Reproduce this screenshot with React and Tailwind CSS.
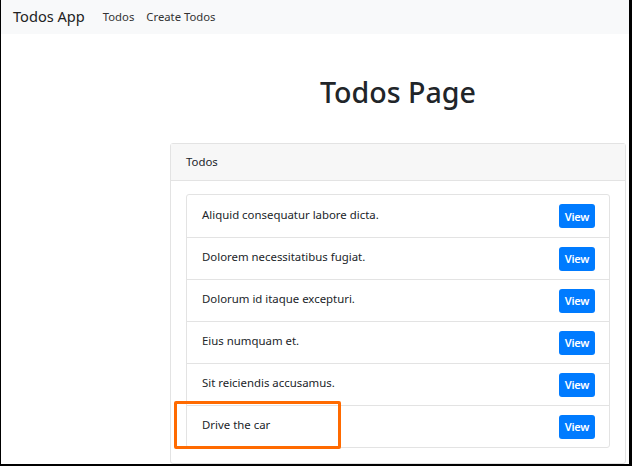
import React from 'react';

const todos = [
  'Aliquid consequatur labore dicta.',
  'Dolorem necessitatibus fugiat.',
  'Dolorum id itaque excepturi.',
  'Eius numquam et.',
  'Sit reiciendis accusamus.',
  'Drive the car',
];

const App = () => {
  return (
    <div
      className="w-[632px] h-[466px] overflow-hidden bg-black"
      style={{ fontFamily: '"Noto Sans", "Open Sans", sans-serif' }}
    >
      <div className="relative ml-px w-[628px] h-[464px] overflow-hidden bg-white text-[#212529]">
        {/* navbar */}
        <nav className="h-[34px] bg-[#f8f9fa] flex items-center pl-[12px]">
          <span className="text-[14.6px] text-[#222] mr-[18px] leading-none -mt-[1px]">Todos App</span>
          <a className="text-[11.3px] text-[#333] mr-[12px] leading-none">Todos</a>
          <a className="text-[11.3px] text-[#333] leading-none">Create Todos</a>
        </nav>

        <div className="ml-[169px] w-[456px]">
          <h1 className="text-[28.6px] font-medium text-center leading-[38px] mt-[39px] mb-[32px] text-[#212529]">
            Todos Page
          </h1>

          <div className="border border-[#e3e3e3] rounded-[3px]">
            <div className="h-[37px] bg-[#f7f7f7] border-b border-[#e3e3e3] flex items-center px-[15px] text-[11.4px]">
              Todos
            </div>
            <div className="pt-[13px] px-[15px] pb-[15px]">
              <ul className="border border-[#e3e3e3] rounded-[3px]">
                {todos.map((t, i) => (
                  <li
                    key={i}
                    className={`h-[42px] flex items-center justify-between pl-[15px] pr-[14px] text-[11.4px] ${i > 0 ? 'border-t border-[#e3e3e3]' : ''}`}
                  >
                    <span className="-mt-[3px]">{t}</span>
                    <button className="bg-[#007bff] text-white text-[11px] font-semibold rounded-[3px] w-[36px] h-[24px] leading-none tracking-[-0.2px]">
                      View
                    </button>
                  </li>
                ))}
              </ul>
            </div>
          </div>
        </div>

        {/* annotation highlight */}
        <div className="absolute left-[173px] top-[401px] w-[167px] h-[48px] border-[3px] border-[#ff6a00] rounded-[2px]" />
      </div>
    </div>
  );
};

export default App;
